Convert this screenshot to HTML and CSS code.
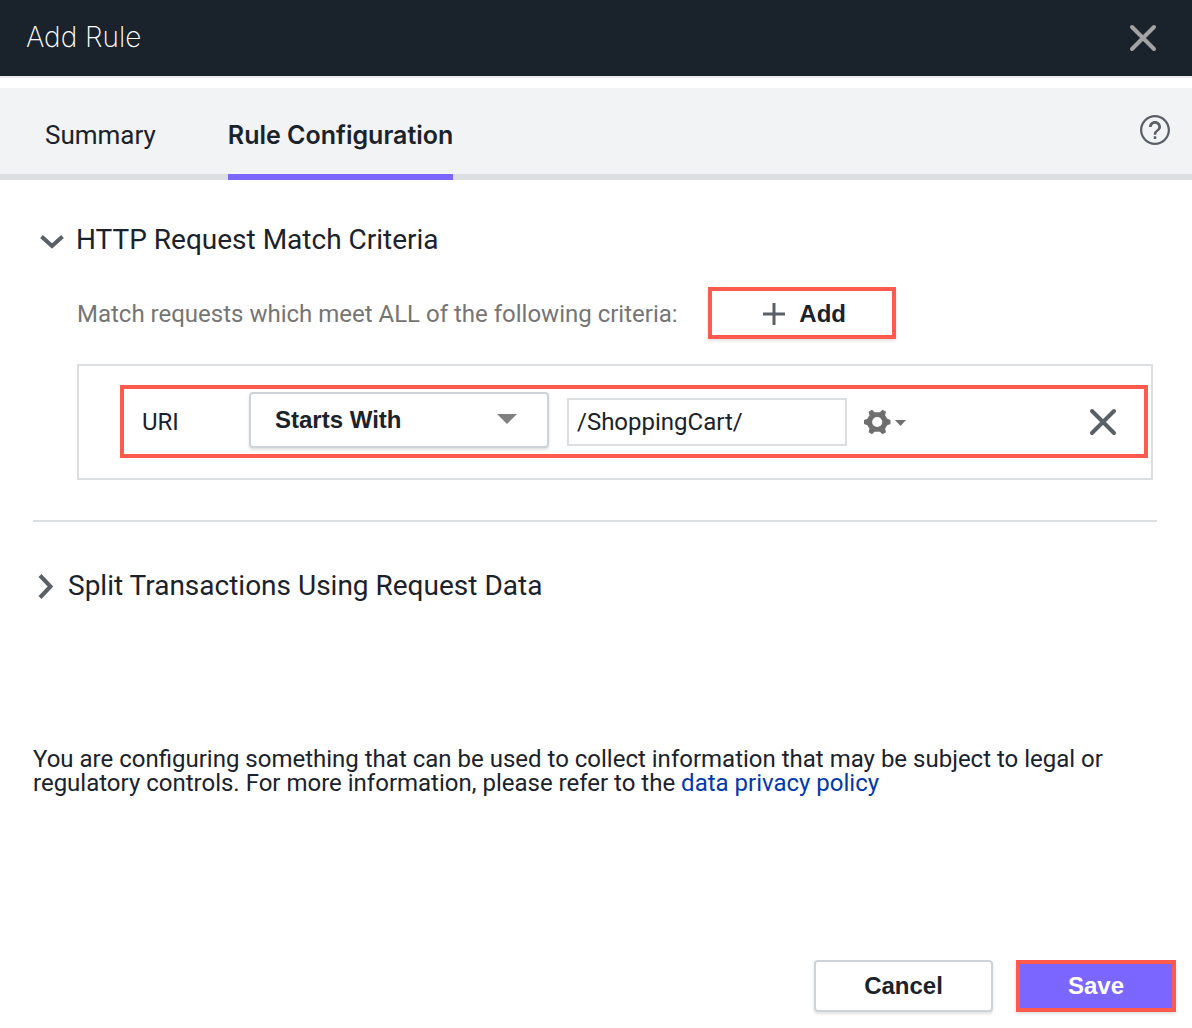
FILE: index.html
```html
<!DOCTYPE html>
<html lang="en">
<head>
<meta charset="utf-8">
<title>Add Rule</title>
<link rel="stylesheet" href="styles.css">
</head>
<body>
<header class="titlebar">
  <h1 class="title">Add Rule</h1>
  <button class="icon-button close" type="button" aria-label="Close">
    <svg width="28" height="28" viewBox="0 0 28 28" fill="none" stroke="currentColor" stroke-width="4" stroke-linecap="round"><path d="M3 3 25 25M25 3 3 25"/></svg>
  </button>
</header>

<nav class="tabs">
  <a class="tab" href="#summary">Summary</a>
  <a class="tab active" href="#configuration">Rule Configuration</a>
  <button class="icon-button help" type="button" aria-label="Help">
    <svg width="30" height="30" viewBox="0 0 24 24" fill="currentColor"><path d="M11 17h2v2.200h-2V17zm1-17C5.400 0 0 5.400 0 12s5.400 12 12 12 12-5.400 12-12S18.600 0 12 0zm0 22.200C6.400 22.200 1.800 17.600 1.800 12S6.400 1.800 12 1.800 22.200 6.400 22.200 12 17.600 22.200 12 22.200zm0-17.400c-2.700 0-4.800 2.100-4.800 4.800h2.200c0-1.500 1.100-2.600 2.600-2.600s2.600 1.100 2.600 2.600c0 2.500-3.600 2.200-3.600 6.200h2c0-2.800 3.800-3.100 3.800-6.200 0-2.700-2.100-4.800-4.800-4.800z"/></svg>
  </button>
</nav>

<main class="content">
  <section class="section">
    <h2 class="heading">
      <button class="toggle expanded" type="button" aria-expanded="true">
        <svg width="24" height="20" viewBox="0 0 24 20" fill="none" stroke="currentColor" stroke-width="4"><path d="M1.500 6.500 12 16 22.500 6.500"/></svg>
        HTTP Request Match Criteria
      </button>
    </h2>
    <div class="criteria">
      <div class="criteria-head">
        <p class="hint">Match requests which meet ALL of the following criteria:</p>
        <button class="button add" type="button">
          <svg width="22" height="22" viewBox="0 0 22 22" fill="none" stroke="#5a6067" stroke-width="3"><path d="M11 0V22M0 11H22"/></svg>
          Add
        </button>
      </div>
      <div class="panel">
        <div class="rule">
          <label class="rule-label" for="uri">URI</label>
          <div class="select">
            <select class="select-box" aria-label="URI condition">
              <option>Starts With</option>
            </select>
          </div>
          <input class="text-box" id="uri" type="text" value="/ShoppingCart/">
          <button class="icon-button gear" type="button" aria-label="Options">
            <svg width="42" height="26" viewBox="0 0 42 26" fill="currentColor">
              <path fill-rule="evenodd" d="M10.600 3.200 8 .8 4.600 2.700 5.500 6.200 3.400 9.800 0 11V15L3.400 16.200 5.500 19.800 4.600 23.300 8 25.200 10.600 22.800H15.900L18.500 25.200 22 23.300 21.100 19.800 23.200 16.200 26.500 15V11L23.200 9.800 21.100 6.200 22 2.700 18.500.8 15.900 3.200ZM13.200 7.900A5.100 5.100 0 1 1 13.200 18.100 5.100 5.100 0 0 1 13.200 7.900Z"/>
              <path d="M31 11H42L36.500 17Z"/>
            </svg>
          </button>
          <button class="icon-button remove" type="button" aria-label="Remove">
            <svg width="28" height="28" viewBox="0 0 28 28" fill="none" stroke="currentColor" stroke-width="4" stroke-linecap="round"><path d="M3 3 25 25M25 3 3 25"/></svg>
          </button>
        </div>
      </div>
    </div>
  </section>

  <section class="section split">
    <h2 class="heading">
      <button class="toggle" type="button" aria-expanded="false">
        <svg width="16" height="26" viewBox="0 0 16 26" fill="none" stroke="currentColor" stroke-width="4"><path d="M2 2.500 12.500 13.500 2 24.500"/></svg>
        Split Transactions Using Request Data
      </button>
    </h2>
  </section>

  <p class="notice">You are configuring something that can be used to collect information that may be subject to legal or regulatory controls. For more information, please refer to the <a class="link" href="#privacy">data privacy policy</a></p>
</main>

<footer class="actions">
  <button class="button cancel" type="button">Cancel</button>
  <button class="button save" type="submit">Save</button>
</footer>
</body>
</html>
```
FILE: styles.css
```css
* {
  box-sizing: border-box;
}

body {
  margin: 0;
  min-height: 100vh;
  display: flex;
  flex-direction: column;
  background: #fff;
  color: #1a222b;
  font: 24px/24px Roboto, sans-serif;
}

h1, h2, p {
  margin: 0;
  font-weight: 400;
}

button, input, select {
  font: inherit;
  color: inherit;
}

.titlebar {
  display: flex;
  align-items: center;
  justify-content: space-between;
  height: 78px;
  padding: 0 35px 0 26px;
  background: #1a222b;
  border-bottom: 2px solid #ece8ec;
}

.title {
  padding-bottom: 2px;
  font: 200 28px/34px Inter, sans-serif;
  color: #fff;
}

.icon-button {
  display: flex;
  padding: 0;
  border: 0;
  background: none;
}

.close {
  color: #a3a3a3;
}

.tabs {
  display: flex;
  gap: 72px;
  height: 92px;
  margin-top: 10px;
  padding: 0 22px 0 45px;
  background: #f1f3f4;
  box-shadow: inset 0 -6px #dbdfe2;
}

.tab {
  padding-top: 32px;
  font-size: 26px;
  line-height: 30px;
  color: inherit;
  text-decoration: none;
}

.tab.active {
  border-bottom: 6px solid #7b66ff;
  font-family: Inter, sans-serif;
  font-size: 25px;
  font-weight: 600;
}

.help {
  margin: 27px 0 0 auto;
  align-self: flex-start;
  color: #5a6067;
}

.content {
  padding: 43px 35px 0 33px;
}

.toggle {
  display: flex;
  align-items: center;
  gap: 14px;
  padding: 0 0 0 5px;
  border: 0;
  background: none;
  font-size: 28px;
  line-height: 34px;
}

.toggle.expanded {
  gap: 12px;
  padding-left: 7px;
}

.toggle svg {
  color: #5a6067;
}

.criteria {
  padding: 30px 4px 40px 44px;
}

.criteria-head {
  display: flex;
  align-items: center;
  gap: 30px;
}

.hint {
  padding-top: 2px;
}

.hint {
  color: #757575;
}

.button {
  display: flex;
  align-items: center;
  justify-content: center;
  gap: 14px;
  height: 52px;
  padding: 0;
  border: 2px solid #ced3d8;
  border-radius: 4px;
  background: #fff;
  box-shadow: 0 2px 3px rgba(0, 0, 0, .12);
  font: 700 24px/28px "Liberation Sans", Arial, sans-serif;
}

.add, .save {
  border: 4px solid #ff5a4d;
  border-radius: 0;
}

.add {
  width: 188px;
  padding: 2px 0 0 6px;
}

.panel {
  margin-top: 25px;
  padding: 19px 3px 20px 41px;
  border: 2px solid #dbdfe2;
}

.rule {
  display: flex;
  align-items: center;
  height: 73px;
  padding: 0 27px 0 18px;
  border: 4px solid #ff5a4d;
}

.rule-label {
  width: 107px;
}

.select {
  position: relative;
  width: 300px;
  margin: 0 18px 4px 0;
}

.select::after {
  content: "";
  position: absolute;
  top: 22px;
  right: 32px;
  border: 10px solid transparent;
  border-top-color: #808080;
  border-bottom: 0;
  pointer-events: none;
}

.select-box {
  appearance: none;
  display: block;
  width: 100%;
  height: 56px;
  padding: 0 24px;
  border: 2px solid #ced3d8;
  border-radius: 4px;
  background: #fff;
  box-shadow: 0 2px 3px rgba(0, 0, 0, .12);
  font: 700 24px/28px "Liberation Sans", Arial, sans-serif;
}

.text-box {
  width: 280px;
  height: 48px;
  padding: 0 8px;
  border: 2px solid #dbdfe2;
}

.gear {
  margin-left: 17px;
  color: #6e6e6e;
}

.remove {
  margin-left: auto;
  color: #5a6067;
}

.split {
  padding: 47px 0 144px;
  border-top: 2px solid #dbdfe2;
}

.link {
  color: #0039ac;
  text-decoration: none;
}

.actions {
  display: flex;
  justify-content: flex-end;
  gap: 23px;
  margin-top: auto;
  padding: 16px;
}

.cancel {
  width: 179px;
}

.save {
  width: 160px;
  background: #7b66ff;
  color: #fff;
}
```
